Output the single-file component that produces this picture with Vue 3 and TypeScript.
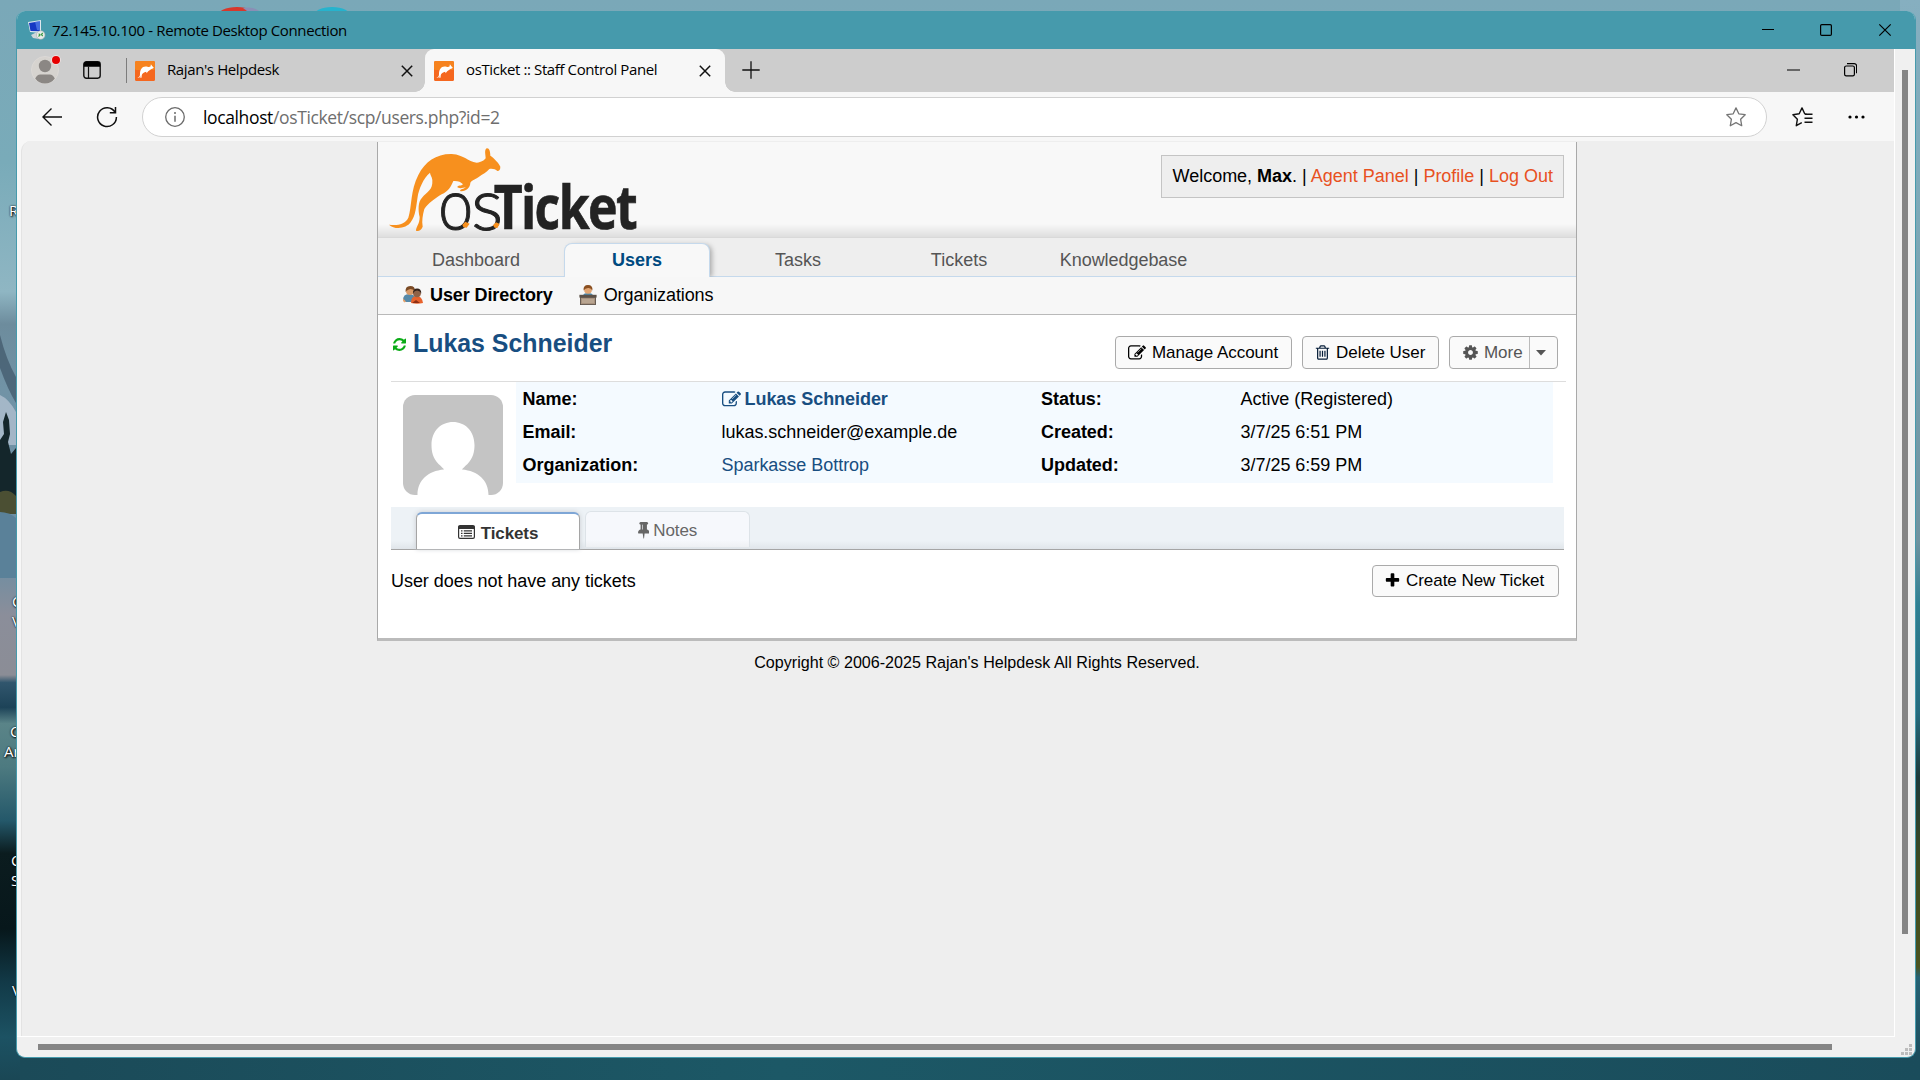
<script setup lang="ts">
interface NavTab { label: string; active?: boolean; wide?: boolean }
interface InfoRow { label: string; value: string; kind: 'name' | 'text' | 'link'; metaLabel: string; metaValue: string }
interface DesktopLabel { text: string; x: number; y: number }

const navTabs: NavTab[] = [
  { label: 'Dashboard' },
  { label: 'Users', active: true },
  { label: 'Tasks' },
  { label: 'Tickets' },
  { label: 'Knowledgebase', wide: true },
]

const rows: InfoRow[] = [
  { label: 'Name:', value: 'Lukas Schneider', kind: 'name', metaLabel: 'Status:', metaValue: 'Active (Registered)' },
  { label: 'Email:', value: 'lukas.schneider@example.de', kind: 'text', metaLabel: 'Created:', metaValue: '3/7/25 6:51 PM' },
  { label: 'Organization:', value: 'Sparkasse Bottrop', kind: 'link', metaLabel: 'Updated:', metaValue: '3/7/25 6:59 PM' },
]

// Desktop shortcut captions that peek out behind the window, by vertical centre
const desktopLabels: DesktopLabel[] = [
  { text: 'R', x: 9, y: 210 },
  { text: 'C', x: 12, y: 601 },
  { text: 'V', x: 12, y: 621 },
  { text: 'C', x: 10, y: 731 },
  { text: 'Ar', x: 4, y: 751 },
  { text: 'C', x: 11, y: 860 },
  { text: 'S', x: 11, y: 880 },
  { text: 'V', x: 12, y: 990 },
]

const editPath = 'M888 1184l116-116-152-152-116 116v56h96v96h56zm440-720q-16-16-33 1l-350 350q-17 17-1 33t33-1l350-350q17-17 1-33zm80 594v190q0 119-84.5 203.5t-203.5 84.5h-832q-119 0-203.5-84.5t-84.5-203.5v-832q0-119 84.5-203.5t203.5-84.5h832q63 0 117 25 15 7 18 23 3 17-9 29l-49 49q-14 14-32 8-23-6-45-6h-832q-66 0-113 47t-47 113v832q0 66 47 113t113 47h832q66 0 113-47t47-113v-126q0-13 9-22l64-64q15-15 35-7t20 29zm-96-738l288 288-672 672h-288v-288zm444 132l-92 92-288-288 92-92q28-28 68-28t68 28l152 152q28 28 28 68t-28 68z'
const trashPath = 'M704 736v576q0 14-9 23t-23 9h-64q-14 0-23-9t-9-23v-576q0-14 9-23t23-9h64q14 0 23 9t9 23zm256 0v576q0 14-9 23t-23 9h-64q-14 0-23-9t-9-23v-576q0-14 9-23t23-9h64q14 0 23 9t9 23zm256 0v576q0 14-9 23t-23 9h-64q-14 0-23-9t-9-23v-576q0-14 9-23t23-9h64q14 0 23 9t9 23zm128 724v-948h-896v948q0 22 7 40.5t14.5 27 10.5 8.5h832q3 0 10.5-8.5t14.5-27 7-40.5zm-672-1076h448l-48-117q-7-9-17-11h-317q-10 2-17 11zm928 32v64q0 14-9 23t-23 9h-96v948q0 83-47 143.5t-113 60.5h-832q-66 0-113-58.5t-47-141.5v-952h-96q-14 0-23-9t-9-23v-64q0-14 9-23t23-9h309l70-167q15-37 54-63t79-26h320q40 0 79 26t54 63l70 167h309q14 0 23 9t9 23z'
const cogPath = 'M1152 896q0-106-75-181t-181-75-181 75-75 181 75 181 181 75 181-75 75-181zm512-109v222q0 12-8 23t-20 13l-185 28q-19 54-39 91 35 50 107 138 10 12 10 25t-9 23q-27 37-99 108t-94 71q-12 0-26-9l-138-108q-44 23-91 38-16 136-29 186-7 28-36 28h-222q-14 0-24.5-8.5t-11.5-21.5l-28-184q-49-16-90-37l-141 107q-10 9-25 9-14 0-25-11-126-114-165-168-7-10-7-23 0-12 8-23 15-21 51-66.5t54-70.5q-27-50-41-99l-183-27q-13-2-21-12.5t-8-23.5v-222q0-12 8-23t19-13l186-28q14-46 39-92-40-57-107-138-10-12-10-24 0-10 9-23 26-36 98.5-107.5t94.5-71.5q13 0 26 10l138 107q44-23 91-38 16-136 29-186 7-28 36-28h222q14 0 24.5 8.5t11.5 21.5l28 184q49 16 90 37l142-107q9-9 24-9 13 0 25 10 129 119 165 170 7 8 7 22 0 12-8 23-15 21-51 66.5t-54 70.5q26 50 41 98l183 28q13 2 21 12.5t8 23.5z'
const plusPath = 'M1600 736v192q0 40-28 68t-68 28h-416v416q0 40-28 68t-68 28h-192q-40 0-68-28t-28-68v-416h-416q-40 0-68-28t-28-68v-192q0-40 28-68t68-28h416v-416q0-40 28-68t68-28h192q40 0 68 28t28 68v416h416q40 0 68 28t28 68z'
const refreshPath = 'M1639 1056q0 5-1 7-64 268-268 434.5t-478 166.5q-146 0-282.5-55t-243.5-157l-129 129q-19 19-45 19t-45-19-19-45v-448q0-26 19-45t45-19h448q26 0 45 19t19 45-19 45l-137 137q71 66 161 102t187 36q134 0 250-65t186-179q11-17 53-117 8-23 30-23h192q13 0 22.5 9.5t9.5 22.5zm25-800v448q0 26-19 45t-45 19h-448q-26 0-45-19t-19-45 19-45l138-138q-148-137-349-137-134 0-250 65t-186 179q-11 17-53 117-8 23-30 23h-199q-13 0-22.5-9.5t-9.5-22.5v-7q65-268 270-434.5t480-166.5q146 0 284 55.5t245 156.5l130-129q19-19 45-19t45 19 19 45z'
const pinPath = 'M800 864v-448q0-14-9-23t-23-9-23 9-9 23v448q0 14 9 23t23 9 23-9 9-23zm672 352q0 26-19 45t-45 19h-429l-51 483q-2 12-10.5 20.5t-20.5 8.5h-1q-27 0-32-27l-76-485h-404q-26 0-45-19t-19-45q0-123 78.5-221.5t177.5-98.5v-512q-52 0-90-38t-38-90 38-90 90-38h640q52 0 90 38t38 90-38 90-90 38v512q99 0 177.5 98.5t78.5 221.5z'
</script>

<template>
  <div class="desktop">
    <svg class="wallpaper" viewBox="0 0 1920 1080" width="1920" height="1080">
      <defs>
        <linearGradient id="sky" x1="0" y1="0" x2="0" y2="1">
          <stop offset="0" stop-color="#7aa8b8" />
          <stop offset="0.15" stop-color="#79abb9" />
          <stop offset="0.27" stop-color="#8fb6c3" />
          <stop offset="0.3" stop-color="#6d8c9d" />
          <stop offset="0.36" stop-color="#7193a6" />
          <stop offset="0.52" stop-color="#6d8ea3" />
          <stop offset="0.57" stop-color="#8b8e9a" />
          <stop offset="0.625" stop-color="#8b8d96" />
          <stop offset="0.632" stop-color="#31566d" />
          <stop offset="0.655" stop-color="#1d4358" />
          <stop offset="0.67" stop-color="#5a8488" />
          <stop offset="0.71" stop-color="#4d7a80" />
          <stop offset="0.76" stop-color="#24586a" />
          <stop offset="0.79" stop-color="#0b1c1f" />
          <stop offset="0.86" stop-color="#07171b" />
          <stop offset="0.91" stop-color="#123a48" />
          <stop offset="0.96" stop-color="#1c5263" />
          <stop offset="1" stop-color="#1a4755" />
        </linearGradient>
        <linearGradient id="shore" x1="0" y1="0" x2="0" y2="1">
          <stop offset="0" stop-color="#86afc0" />
          <stop offset="0.2" stop-color="#7da9b8" />
          <stop offset="0.5" stop-color="#6f93a0" />
          <stop offset="0.56" stop-color="#2f7f92" />
          <stop offset="0.66" stop-color="#256b7e" />
          <stop offset="0.72" stop-color="#1d3a3a" />
          <stop offset="0.8" stop-color="#3d4a20" />
          <stop offset="0.895" stop-color="#4a5320" />
          <stop offset="0.905" stop-color="#256274" />
          <stop offset="1" stop-color="#1b4a59" />
        </linearGradient>
        <linearGradient id="lake" x1="0" y1="0" x2="1" y2="0">
          <stop offset="0" stop-color="#1b4a58" />
          <stop offset="0.4" stop-color="#1c5866" />
          <stop offset="1" stop-color="#1a4c5b" />
        </linearGradient>
      </defs>
      <rect width="1920" height="1080" fill="url(#sky)" />
      <rect x="1900" width="20" height="1080" fill="url(#shore)" />
      <rect x="20" y="1050" width="1900" height="30" fill="url(#lake)" />
      <path d="M0 335q6 24 16 42v26Q8 390 0 368z" fill="#3f5668" opacity=".7" />
      <path d="M0 395Q9 399 16 412V445H0z" fill="#b9c6d6" opacity=".7" />
      <path d="M6 412l3 8 1 14-2 8 3 12 5-6v64H0v-72l4-6-1-12z" fill="#14262b" />
      <path d="M0 492q9-4 16 4v18H0z" fill="#4b4f33" />
      <path d="M0 512q9 0 16 6v60H0z" fill="#5a8199" />
      <ellipse cx="237" cy="16" rx="20" ry="9" fill="#d8382c" />
      <path d="M243 8q10-2 16 3l-12 0z" fill="#8a8fb5" />
      <ellipse cx="332" cy="16" rx="19" ry="9" fill="#26b3cd" />
    </svg>
    <span v-for="(item, i) in desktopLabels" :key="i" class="desktop-label" :style="{ left: item.x + 'px', top: item.y - 10 + 'px' }">{{ item.text }}</span>

    <div class="window">
      <header class="titlebar">
        <svg class="rdp" viewBox="0 0 20 20" width="20" height="20">
          <path d="M1 2l13-2v13L3 12z" fill="#dfe7ee" />
          <path d="M2 3l11-1.800v10L3.500 11z" fill="#1638c4" />
          <path d="M8 1.800l5-.8v9L10 10z" fill="#5d8bee" opacity=".65" />
          <path d="M4 15l6-3 4 2-2 5-6-1z" fill="#cfd6da" />
          <circle cx="13.700" cy="15" r="4.300" fill="#e9ecea" stroke="#a8b0ae" stroke-width=".6" />
          <path d="M11.500 16.500l1.500-1.500-1.300-1.300M15.800 13l-1.500 1.500 1.500 1.500" fill="none" stroke="#3d9a45" stroke-width="1.100" />
        </svg>
        <span class="title-text">72.145.10.100 - Remote Desktop Connection</span>
        <svg class="window-controls" viewBox="0 0 130 14" width="130" height="14" fill="none" stroke="#000" stroke-width="1.200">
          <path d="M0 6.500h12" />
          <rect x="58.600" y="1.600" width="10.800" height="10.800" rx="1.200" />
          <path d="M117.300 1.300l11.400 11.400M128.700 1.300l-11.400 11.400" />
        </svg>
      </header>

      <div class="remote">
        <div class="session">
          <div class="tabstrip">
            <svg class="profile" viewBox="0 0 30 30" width="30" height="30">
              <circle cx="14" cy="16" r="13.600" fill="#d6d3cf" stroke="#e0deda" stroke-width=".6" />
              <circle cx="14" cy="12" r="6.200" fill="#8b8784" />
              <path d="M4.200 24.500q2-4 5-4h9.600q3 0 5 4-3.600 5-9.800 5t-9.800-5z" fill="#8b8784" />
              <circle cx="25" cy="6" r="4.800" fill="#f4e4e4" />
              <circle cx="25" cy="6" r="4" fill="#e60000" />
            </svg>
            <svg class="workspaces" viewBox="0 0 18 18" width="18" height="18">
              <rect x=".8" y=".8" width="16.400" height="16.400" rx="2.600" fill="none" stroke="#111" stroke-width="1.400" />
              <path d="M.8 5.800V3.400A2.600 2.600 0 0 1 3.400.8h11.200a2.600 2.600 0 0 1 2.600 2.600v2.400z" fill="#000" />
              <path d="M5.500 5.500V17" stroke="#111" stroke-width="1.200" />
            </svg>
            <span class="divider"></span>
            <div class="tab">
              <svg class="favicon" viewBox="0 0 20 20" width="20" height="20">
                <rect width="20" height="20" rx="1.500" fill="#f5671f" /><rect width="20" height="9" rx="1.500" fill="#f6831f" />
                <path d="M2.500 16.600Q5 16.200 5 13C5 8.500 7 5.500 10.500 5.400c2.300 0 3 1.200 5 .2l.4-2.400 1.300 1.800 1.600 1.800-1 .7c-2.200.5-3 1.800-4.600 2.800l-1.600 2-.4-1.600c-2 .5-4.200 1.800-4.400 3.400l-.3 2.600-1.300.1.800-3.500C5.500 16 4.500 17.300 2.500 16.600z" fill="#fff" />
              </svg>
              <span class="tab-text">Rajan's Helpdesk</span>
              <svg class="close" viewBox="0 0 12 12" width="12" height="12" stroke="#111" stroke-width="1.500"><path d="M.8.8l10.400 10.400M11.200.8L.8 11.200" /></svg>
            </div>
            <div class="tab active">
              <svg class="favicon" viewBox="0 0 20 20" width="20" height="20">
                <rect width="20" height="20" rx="1.500" fill="#f5671f" /><rect width="20" height="9" rx="1.500" fill="#f6831f" />
                <path d="M2.500 16.600Q5 16.200 5 13C5 8.500 7 5.500 10.500 5.400c2.300 0 3 1.200 5 .2l.4-2.400 1.300 1.800 1.600 1.800-1 .7c-2.200.5-3 1.800-4.600 2.800l-1.600 2-.4-1.600c-2 .5-4.200 1.800-4.400 3.400l-.3 2.600-1.300.1.800-3.500C5.500 16 4.500 17.300 2.500 16.600z" fill="#fff" />
              </svg>
              <span class="tab-text">osTicket :: Staff Control Panel</span>
              <svg class="close" viewBox="0 0 12 12" width="12" height="12" stroke="#111" stroke-width="1.500"><path d="M.8.8l10.400 10.400M11.200.8L.8 11.200" /></svg>
            </div>
            <svg class="new-tab" viewBox="0 0 18 18" width="18" height="18" stroke="#111" stroke-width="1.300"><path d="M9 .3v17.400M.3 9h17.400" /></svg>
            <svg class="inner-controls" viewBox="0 0 70 14" width="70" height="14" fill="none" stroke="#000" stroke-width="1.200">
              <path d="M0 7h13" />
              <rect x="57.600" y="3" width="9.800" height="9.900" rx="1.600" />
              <path d="M60 .7h7.200q2.400 0 2.400 2.400v7.200" />
            </svg>
          </div>

          <div class="toolbar">
            <svg class="back" viewBox="0 0 20 18" width="20" height="18" fill="none" stroke="#111" stroke-width="1.400"><path d="M20 9H1M9.500.6L1 9l8.500 8.400" /></svg>
            <svg class="reload" viewBox="0 0 22 22" width="22" height="22" fill="none" stroke="#111" stroke-width="1.500"><path d="M19 6.200A9.400 9.400 0 1 0 20.400 11M19.500 1v5.700h-5.700" /></svg>
            <div class="address">
              <svg class="info" viewBox="0 0 20 20" width="20" height="20"><circle cx="10" cy="10" r="9.300" fill="none" stroke="#6b6b6b" stroke-width="1.300" /><path d="M10 8.700v6" stroke="#6b6b6b" stroke-width="1.500" /><circle cx="10" cy="6" r="1" fill="#6b6b6b" /></svg>
              <span class="url"><span class="host">localhost</span>/osTicket/scp/users.php?id=2</span>
              <svg class="star" viewBox="0 0 20 20" width="20" height="20" fill="none" stroke="#767676" stroke-width="1.300" stroke-linejoin="round"><path d="M10 .9l2.800 5.900 6.400.9-4.600 4.500 1.100 6.500L10 15.600l-5.700 3.100 1.100-6.500L.8 7.700l6.400-.9z" /></svg>
            </div>
            <svg class="favorites" viewBox="0 0 21 20" width="21" height="20" fill="none" stroke="#111" stroke-width="1.400" stroke-linejoin="round"><path d="M14.500 6.900l-1.800-.2L10 .9 7.200 6.800.9 7.700l4.500 4.500-1.100 6.500 5.500-3M13 7.200h7.500M12.500 11.300h8M12.500 15.300h8" /></svg>
            <svg class="menu" viewBox="0 0 17 4" width="17" height="4"><circle cx="2" cy="2" r="1.600" /><circle cx="8.500" cy="2" r="1.600" /><circle cx="15" cy="2" r="1.600" /></svg>
          </div>

          <main class="viewport">
            <div class="container">
              <div class="page-header">
                <svg class="logo" viewBox="51 30 760 270" width="253.330" height="90">
                  <path d="M57 269C80 272 104 270 115 248C126 215 121 165 145 120C165 80 200 56 245 57C285 60 292 80 320 83C335 82 342 76 347 70C347 60 342 45 350 40C357 38 361 48 361 62C373 70 386 84 391 95C391 104 388 108 382 108C376 103 368 100 358 102C350 112 338 117 325 127C312 136 303 137 301 144C300 158 290 168 274 169C268 168 270 164 277 162C284 160 287 157 288 156C278 160 264 161 262 156C263 151 274 153 279 148C273 140 262 137 250 138C243 155 235 169 215 178C195 190 175 205 163 222C158 240 155 258 158 275C153 287 145 290 138 287C138 275 149 268 149 246C144 225 144 200 156 188C172 170 189 165 187 135C186 124 180 120 180 113C160 128 146 165 143 185C138 215 138 240 122 262C110 280 75 286 57 269Z" fill="#f7901e" />
                  <g fill="#232323">
                    <text class="logo-thin" transform="translate(205 285) scale(.86 1)">o</text>
                    <text class="logo-thin" transform="translate(304 285) scale(1.03 1)">s</text>
                    <text class="logo-bold" transform="translate(371 283) scale(.82 1)">Ticket</text>
                  </g>
                  <path d="M277 269l9-9 13 6-9 12-10-1zM369 271l9-9 11 5-7 12-8-1z" fill="#f7901e" />
                </svg>
                <p class="welcome">Welcome, <strong>Max</strong>. | <a>Agent Panel</a> | <a>Profile</a> | <a>Log Out</a></p>
              </div>

              <nav class="nav">
                <a v-for="tab in navTabs" :key="tab.label" class="nav-tab" :class="{ active: tab.active, wide: tab.wide }">{{ tab.label }}</a>
              </nav>

              <div class="subnav">
                <svg class="users-icon" viewBox="0 0 20 18" width="20" height="18">
                  <path d="M0 14q0-6 6-6t7 6v2H2z" fill="#5689a8" />
                  <path d="M0 12.500l3 3-1.500 1L0 15z" fill="#e8a36d" />
                  <circle cx="7" cy="5" r="4" fill="#d99a68" /><path d="M2.600 6q-.6-6 4.600-6t4.600 5q-3-2.600-6-1.600T2.600 6z" fill="#7a4a25" />
                  <path d="M8 17q0-7 5.500-7t6.500 7q-6 1.500-12 0z" fill="#e8622c" />
                  <circle cx="14" cy="7.300" r="3.900" fill="#8f6247" /><path d="M9.900 7.500q0-5 4.200-5t4.200 5q-1.600-3-4.200-3t-4.200 3z" fill="#33221a" />
                  <path d="M9 17l4-3 4 3z" fill="#8d2f14" />
                </svg>
                <span class="sub-active">User Directory</span>
                <svg class="org-icon" viewBox="0 0 18 20" width="18" height="20">
                  <path d="M4 11q0-3 5-3t5 3z" fill="#4f86a8" />
                  <circle cx="9" cy="4.800" r="3.900" fill="#e2a572" /><path d="M4.600 5.500Q4 0 9 0t4.400 5.500Q12 2.600 9 3T4.600 5.500z" fill="#8a4f20" />
                  <rect x=".4" y="9.800" width="17.200" height="2.800" fill="#5c5148" /><rect x="1.500" y="12.400" width="15" height="7.200" fill="#a8927e" stroke="#5c5148" stroke-width=".9" />
                  <path d="M3 14h12v4H3z" fill="#b9a591" />
                </svg>
                <span>Organizations</span>
              </div>

              <div class="content">
                <div class="heading-row">
                  <h2><svg class="refresh" viewBox="128 128 1536 1536" width="13" height="13"><path :d="refreshPath" fill="#0aab16" /></svg><span>Lukas Schneider</span></h2>
                  <div class="actions">
                    <button class="btn manage"><svg viewBox="0 0 1792 1792" width="18" height="18"><path :d="editPath" /></svg><span>Manage Account</span></button>
                    <button class="btn delete"><svg viewBox="0 0 1792 1792" width="17" height="17"><path :d="trashPath" fill="#061d38" /></svg><span>Delete User</span></button>
                    <button class="btn more"><svg viewBox="0 0 1792 1792" width="17" height="17"><path :d="cogPath" fill="#555" /></svg><span>More</span><i class="caret"><svg viewBox="0 0 10 6" width="10" height="6"><path d="M0 0h10L5 5.500z" fill="#555" /></svg></i></button>
                  </div>
                </div>

                <div class="profile-row">
                  <svg class="avatar" viewBox="0 0 100 100" width="100" height="100"><rect width="100" height="100" rx="12" fill="#c4c4c4" /><path d="M14.500 100C14.500 85 25 76 41 74.500Q40 73 35.500 69C30 63 28.500 57 28.500 50C28.500 36 38 27 50 27S71.500 36 71.500 50C71.500 57 70 63 64.500 69Q60 73 59 74.500C75 76 85.500 85 85.500 100z" fill="#fff" /></svg>
                  <div class="info-table">
                    <div v-for="row in rows" :key="row.label" class="info-row">
                      <strong>{{ row.label }}</strong>
                      <span class="col-value" :class="row.kind"><svg v-if="row.kind === 'name'" viewBox="0 0 1792 1792" width="19" height="19"><path :d="editPath" fill="#184e81" /></svg><span>{{ row.value }}</span></span>
                      <strong>{{ row.metaLabel }}</strong>
                      <span>{{ row.metaValue }}</span>
                    </div>
                  </div>
                </div>

                <div class="tabs">
                  <div class="ctab current"><svg viewBox="0 0 17 14" width="17" height="14"><rect x=".6" y=".6" width="15.800" height="12.800" rx="1.400" fill="none" stroke="#333" stroke-width="1.200" /><path d="M.5 1h16v3H.5zM3 5.300h1.500v1.300H3zM3 7.800h1.500v1.300H3zM3 10.200h1.500v1.300H3zM5.800 5.300H14v1.300H5.800zM5.800 7.800H14v1.300H5.800zM5.800 10.200H14v1.300H5.800z" fill="#333" /></svg><span>Tickets</span></div>
                  <div class="ctab other"><svg viewBox="320 128 1152 1664" width="11.500" height="16.500"><path :d="pinPath" fill="#666" /></svg><span>Notes</span></div>
                </div>

                <div class="empty-row">
                  <span class="empty-text">User does not have any tickets</span>
                  <button class="btn create"><svg viewBox="0 0 1792 1792" width="17" height="17"><path :d="plusPath" /></svg><span>Create New Ticket</span></button>
                </div>
              </div>
            </div>
            <footer>Copyright © 2006-2025 Rajan's Helpdesk All Rights Reserved.</footer>
          </main>
        </div>
        <div class="v-scroll"><span class="v-thumb"></span></div>
        <div class="h-scroll"><span class="h-thumb"></span>
          <svg class="grip" viewBox="0 0 12 12" width="12" height="12" fill="#bdbdbd"><path d="M8 0h3v3H8zM4 4h3v3H4zM8 4h3v3H8zM0 8h3v3H0zM4 8h3v3H4zM8 8h3v3H8z" /></svg>
        </div>
      </div>
    </div>
  </div>
</template>

<style>
html, body { margin: 0; overflow: hidden; }
</style>

<style scoped>
* { box-sizing: border-box; }
svg { display: block; flex: none; }
.desktop { position: relative; width: 1920px; height: 1080px; overflow: hidden; font-family: "Liberation Sans", Arial, sans-serif; font-size: 18px; color: #000; }
.wallpaper { position: absolute; left: 0; top: 0; }
.desktop-label { position: absolute; font: 15px/20px "Open Sans", sans-serif; color: #fff; text-shadow: 1px 1px 2px #000, 0 0 2px #000; }
.window { position: absolute; left: 16px; top: 11px; width: 1900px; height: 1047px; border: 1px solid #469aac; border-top: 0; border-radius: 9px; overflow: hidden; background: #f0f0f0; }

.titlebar { display: flex; align-items: center; height: 38px; padding: 0 23px 0 10px; background: #469aac; }
.title-text { margin-left: 5px; font: 15px/38px "Open Sans", sans-serif; letter-spacing: -0.37px; white-space: pre; }
.window-controls { margin-left: auto; }

.remote { display: grid; grid-template-columns: 1878px 1fr; grid-template-rows: 988px 1fr; height: 1008px; }
.session { height: 988px; background: #f7f7f7; border-right: 1px solid #fff; border-bottom: 1px solid #fff; overflow: hidden; }

.tabstrip { display: flex; height: 43px; background: #cdcdcd; }
.profile { margin: 5px 0 0 14px; }
.workspaces { margin: 12px 0 0 22px; }
.divider { width: 1px; height: 25px; margin: 9px 0 0 25px; background: #7d7d7d; }
.tab { display: flex; width: 298px; height: 43px; padding-left: 8px; }
.tab.active { position: relative; width: 300px; padding-left: 9px; background: #f7f7f7; border-radius: 9px 9px 0 0; }
.tab.active::before, .tab.active::after { content: ""; position: absolute; bottom: 0; width: 10px; height: 10px; }
.tab.active::before { left: -10px; background: radial-gradient(circle at 0 0, #cdcdcd 9.500px, #f7f7f7 10px); }
.tab.active::after { right: -10px; background: radial-gradient(circle at 100% 0, #cdcdcd 9.500px, #f7f7f7 10px); }
.favicon { margin-top: 12px; }
.tab-text { margin-left: 12px; font: 15px/41px "Open Sans", sans-serif; letter-spacing: -0.39px; white-space: pre; }
.close { margin: 16px 12px 0 auto; }
.tab.active .close { margin-right: 14px; }
.new-tab { margin: 12px 0 0 17px; }
.inner-controls { margin: 14px 37px 0 auto; }

.toolbar { display: flex; align-items: center; height: 49px; background: #f7f7f7; }
.back { margin-left: 25px; }
.reload { margin-left: 34px; }
.address { display: flex; align-items: center; width: 1625px; height: 40px; margin-left: 24px; padding: 0 20px 0 22px; background: #fff; border: 1px solid #d1d1d1; border-radius: 20px; }
.url { margin-left: 18px; font: 17.500px/38px "Open Sans", sans-serif; letter-spacing: -0.37px; color: #6e6e6e; white-space: pre; }
.host { color: #000; }
.star { margin-left: auto; }
.favorites { margin-left: 25px; }
.menu { margin-left: 35px; }

.viewport { height: 896px; margin-left: 4px; background: #eee; border-left: 1px solid #e3e3e3; border-radius: 10px 0 0 0; padding: 1px 0 0 355px; }
.container { width: 1200px; height: 499px; background: #fff; border: solid #a9a9a9; border-width: 0 1px; border-bottom: 3px solid #bbb; }
.page-header { display: flex; height: 96px; padding: 3px 12px 0 9px; background: linear-gradient(#f8f8f8 0 82px, #dedede 95px); border-bottom: 1px solid #d9d9d9; }
.logo { overflow: visible; }
.logo-thin { font: 300 218px Lato, sans-serif; stroke: #232323; stroke-width: 3px; }
.logo-bold { font: 700 183px "Open Sans", sans-serif; letter-spacing: -6px; stroke: #232323; stroke-width: 2px; }
.welcome { width: 403px; height: 43px; margin: 10px 0 0 auto; padding-left: 10.500px; background: #eee; border: 1px solid #c4c4c4; line-height: 40px; letter-spacing: -0.01px; white-space: pre; }
.welcome a { color: #e8511f; }
.nav { display: flex; gap: 15px; height: 39px; padding: 5px 0 0 25px; background: #eee; border-bottom: 1px solid #c5d9ec; }
.nav-tab { width: 146px; height: 33px; line-height: 35px; text-align: center; color: #555; }
.nav-tab.wide { width: 153px; letter-spacing: -0.05px; }
.nav-tab.active { height: 34px; background: #f8f8f8; border: 1px solid #c5d9ec; border-bottom: 0; border-radius: 8px 8px 0 0; color: #004a80; font-weight: bold; line-height: 33px; box-shadow: 3px 1px 5px -1px #aaa; clip-path: inset(-6px -8px 0 -2px); }
.subnav { display: flex; align-items: center; height: 38px; padding: 0 0 1px 25px; background: #f7f7f7; border-bottom: 1px solid #b9b9b9; line-height: 36px; letter-spacing: -0.1px; }
.subnav span { margin-left: 7px; }
.sub-active { font-weight: bold; }
.org-icon { margin-left: 26px; }

.content { padding: 0 10px 0 13px; }
.heading-row { display: flex; height: 67px; border-bottom: 1px solid #ddd; }
h2 { display: flex; align-items: flex-start; margin: 0; font-size: 24.900px; line-height: 56px; color: #184e81; }
.refresh { margin: 23px 7px 0 2px; }
.actions { display: flex; gap: 10px; margin: 21px 8px 0 auto; }
.btn { display: flex; align-items: center; height: 33px; padding: 0; background: #fafafa; border: 1px solid #aaa; border-radius: 4px; font: 17px/31px "Liberation Sans", Arial, sans-serif; letter-spacing: -0.04px; color: #000; white-space: pre; }
.manage { width: 177px; padding-left: 12px; }
.manage span { margin-left: 6px; }
.delete { width: 137px; padding-left: 11px; }
.delete span { margin-left: 5px; }
.more { width: 109px; padding-left: 12px; color: #555; }
.more span { margin-left: 5px; }
.caret { display: flex; align-items: center; justify-content: center; width: 28px; height: 31px; margin-left: auto; padding-right: 5px; border-left: 1px solid #bbb; }

.profile-row { display: flex; height: 125px; }
.avatar { margin: 13px 0 0 12px; }
.info-table { width: 1037px; height: 101px; margin-left: 13px; padding-left: 6.500px; background: #f4faff; }
.info-row { display: grid; grid-template-columns: 199px 319.500px 199.500px 1fr; height: 33px; line-height: 34px; letter-spacing: -0.03px; white-space: pre; }
.col-value { display: flex; align-items: center; }
.col-value.name { color: #184e81; font-weight: bold; letter-spacing: -0.05px; }
.col-value.name span { margin-left: 4px; }
.col-value.link { color: #184e81; }

.tabs { display: flex; gap: 5px; width: 1173px; height: 43px; padding: 4px 0 0 25px; background: linear-gradient(#edf2f6 0 34px, #e0e5ea); border-bottom: 1px solid #a5a5a5; }
.ctab { display: flex; justify-content: center; }
.current { width: 164px; height: 37px; margin-top: 1px; padding-top: 11px; background: #fff; border: 1px solid #a5a5a5; border-top: 2px solid #7ea6d6; border-bottom: 0; border-radius: 6px 6px 0 0; color: #333; font-weight: bold; font-size: 17px; letter-spacing: -0.1px; box-shadow: 0 0 5px #c8ccd0; }
.current span { margin-left: 6px; line-height: 18px; }
.other { width: 165px; height: 36px; padding-top: 10px; background: linear-gradient(#f6f8fc 0 28px, #eef0f3); border: 1px solid #dde3e8; border-bottom: 0; border-radius: 6px 6px 0 0; color: #666; font-size: 17px; letter-spacing: -0.1px; }
.other span { margin-left: 4px; line-height: 17px; }

.empty-row { display: flex; justify-content: space-between; padding: 15px 7px 0 0; line-height: 32px; }
.empty-text { letter-spacing: -0.05px; }
.create { width: 187px; height: 32px; padding: 0 0 1px 11px; line-height: 28px; }
.create span { margin-left: 5px; }
footer { width: 1200px; text-align: center; font-size: 16.130px; line-height: 42px; }

.v-scroll { padding: 21px 0 0 7px; }
.v-thumb { display: block; width: 6px; height: 864px; background: #858585; }
.h-scroll { grid-column: 1 / 3; display: flex; padding: 7px 2px 0 21px; }
.h-thumb { width: 1794px; height: 6px; background: #858585; }
.grip { margin-left: auto; }
</style>
